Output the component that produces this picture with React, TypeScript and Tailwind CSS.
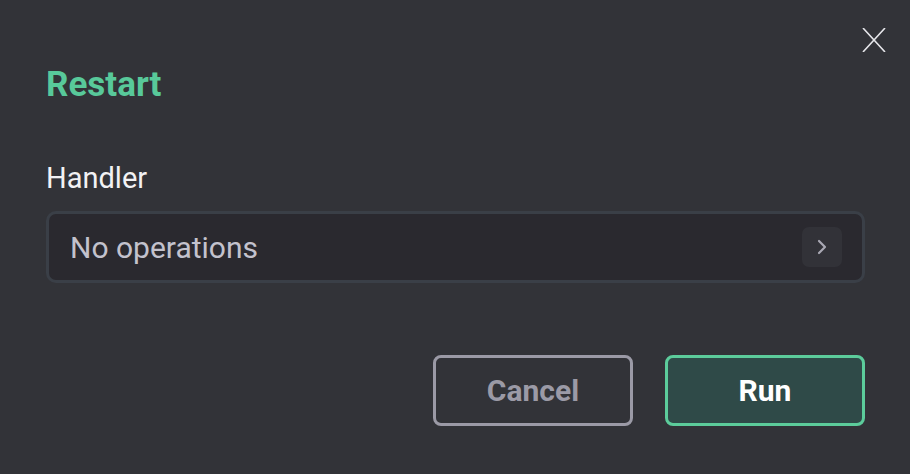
import { ChevronRight } from 'lucide-react'

export default function App() {
  return (
    <div className="relative w-[910px] h-[474px] bg-[#323338] font-['Roboto',sans-serif] pl-[46px] pr-[45px] pt-[65px] overflow-hidden">
      <button className="absolute right-[24px] top-[28px] w-[24px] h-[24px] text-[#e6e6ea]" title="Close">
        <svg viewBox="0 0 24 24" width="24" height="24" fill="none" stroke="currentColor" strokeWidth="1.6">
          <path d="M1 0 L23 24 M23 0 L1 24" />
        </svg>
      </button>

      <h2 className="text-[35px] leading-[40px] font-bold text-[#58c99a]">Restart</h2>

      <div className="mt-[55px]">
        <label className="block text-[29px] leading-[36px] text-[#f2f2f4] mb-[15px]">Handler</label>
        <div className="flex items-center justify-between h-[72px] rounded-[10px] border-[3px] border-[#3a3f47] bg-[#2a292f] pl-[21px] pr-[20px]">
          <span className="text-[30px] text-[#c3c2cd]">No operations</span>
          <div className="flex items-center justify-center w-[40px] h-[40px] rounded-[7px] bg-[#323238] text-[#a9a8b3]">
            <ChevronRight className="w-[24px] h-[24px]" strokeWidth={2.2} />
          </div>
        </div>
      </div>

      <div className="flex justify-end gap-[32px] mt-[72px]">
        <button className="w-[200px] h-[71px] rounded-[8px] border-[3px] border-[#9b9aa6] text-[#9b9aa6] text-[30px] font-bold">
          Cancel
        </button>
        <button className="w-[200px] h-[71px] rounded-[8px] border-[3px] border-[#5ccc9b] bg-[#2f4a48] text-white text-[30px] font-bold">
          Run
        </button>
      </div>
    </div>
  )
}
